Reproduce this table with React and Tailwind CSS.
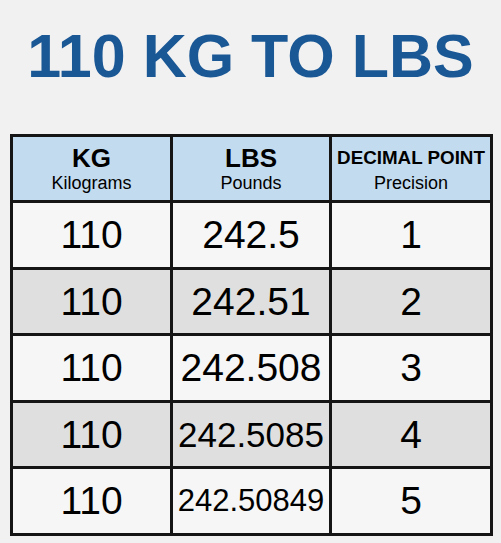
const rows = [
  { kg: '110', lbs: '242.5', lbsSize: 'text-[39px]', dp: '1', shade: 'bg-[#f6f6f6]' },
  { kg: '110', lbs: '242.51', lbsSize: 'text-[39px]', dp: '2', shade: 'bg-[#dfdfdf]' },
  { kg: '110', lbs: '242.508', lbsSize: 'text-[39px]', dp: '3', shade: 'bg-[#f6f6f6]' },
  { kg: '110', lbs: '242.5085', lbsSize: 'text-[35px]', dp: '4', shade: 'bg-[#dfdfdf]' },
  { kg: '110', lbs: '242.50849', lbsSize: 'text-[31px]', dp: '5', shade: 'bg-[#f6f6f6]' },
];

const App = () => {
  return (
    <div
      className="w-[501px] h-[543px] bg-[#f1f1f1] overflow-hidden"
      style={{ fontFamily: '"Liberation Sans", Arial, sans-serif' }}
    >
      <h1 className="pt-[26px] text-center text-[61px] leading-none font-bold text-[#1a5795]">
        110 KG TO LBS
      </h1>

      <table className="mt-[47px] ml-[10px] w-[480px] table-fixed border-collapse border-[3px] border-[#151515] text-black">
        <colgroup>
          <col className="w-[160px]" />
          <col className="w-[159px]" />
          <col className="w-[161px]" />
        </colgroup>
        <thead>
          <tr className="h-[66px] bg-[#c3dbee]">
            <th className="border-[3px] border-[#151515] p-0 font-normal">
              <div className="text-[26px] leading-[28px] font-bold">KG</div>
              <div className="text-[18px] leading-[22px]">Kilograms</div>
            </th>
            <th className="border-[3px] border-[#151515] p-0 font-normal">
              <div className="text-[26px] leading-[28px] font-bold">LBS</div>
              <div className="text-[18px] leading-[22px]">Pounds</div>
            </th>
            <th className="border-[3px] border-[#151515] p-0 font-normal">
              <div className="text-[18.8px] leading-[28px] font-bold whitespace-nowrap">DECIMAL POINT</div>
              <div className="text-[18px] leading-[22px]">Precision</div>
            </th>
          </tr>
        </thead>
        <tbody>
          {rows.map((r, i) => (
            <tr key={i} className={`h-[66.5px] ${r.shade}`}>
              <td className="border-[3px] border-[#151515] p-0 text-center text-[39px] leading-none">{r.kg}</td>
              <td className={`border-[3px] border-[#151515] p-0 text-center leading-none whitespace-nowrap ${r.lbsSize}`}>{r.lbs}</td>
              <td className="border-[3px] border-[#151515] p-0 text-center text-[39px] leading-none">{r.dp}</td>
            </tr>
          ))}
        </tbody>
      </table>
    </div>
  );
};

export default App;
